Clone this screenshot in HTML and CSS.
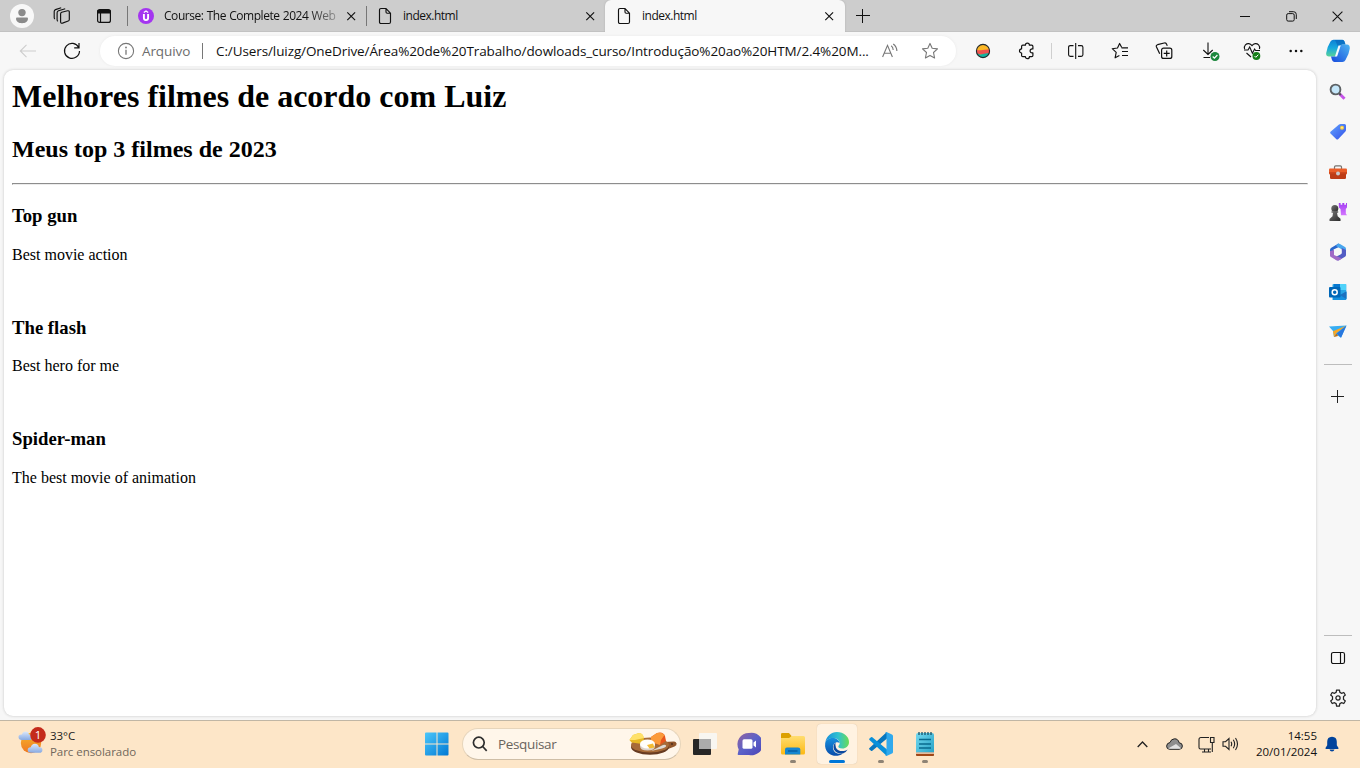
FILE: index.html
```html
<!DOCTYPE html>
<html lang="pt-BR">
<head>
<meta charset="utf-8">
<title>index.html</title>
<link rel="stylesheet" href="styles.css">
</head>
<body>
<svg class="defs" width="0" height="0" aria-hidden="true">
  <symbol id="close" viewBox="0 0 10 10"><path d="M1.300 1.300l7.800 7.800M9.100 1.300l-7.800 7.800" fill="none" stroke="#111" stroke-width="1.150"/></symbol>
  <symbol id="doc" viewBox="0 0 14 18"><path d="M3 1.500h5l4.500 4.700v8.800q0 1.500-1.500 1.500H3q-1.500 0-1.500-1.500V3Q1.500 1.500 3 1.500zM8 1.800v3.200q0 1.200 1.200 1.200h3" fill="none" stroke="#111" stroke-width="1.150"/></symbol>
  <linearGradient id="winG" x1="0" y1="0" x2="1" y2="1"><stop offset="0" stop-color="#4cc7fa"/><stop offset="1" stop-color="#0078d4"/></linearGradient>
  <linearGradient id="cpA" x1="0" y1="0" x2="0" y2="1"><stop offset="0" stop-color="#0b80d5"/><stop offset=".5" stop-color="#18a9de"/><stop offset="1" stop-color="#59d398"/></linearGradient>
  <linearGradient id="cpB" x1="1" y1="0" x2="0" y2="1"><stop offset="0" stop-color="#4db5f1"/><stop offset="1" stop-color="#1749dd"/></linearGradient>
  <linearGradient id="tagG" x1="0" y1="0" x2="1" y2="1"><stop offset="0" stop-color="#62a5ff"/><stop offset="1" stop-color="#3450e8"/></linearGradient>
  <linearGradient id="purG" x1="0" y1="0" x2="0" y2="1"><stop offset="0" stop-color="#a33df3"/><stop offset="1" stop-color="#d477ff"/></linearGradient>
  <linearGradient id="greyG" x1="0" y1="0" x2="1" y2="1"><stop offset="0" stop-color="#777"/><stop offset="1" stop-color="#282828"/></linearGradient>
  <linearGradient id="cloudG" x1="0" y1="0" x2="0" y2="1"><stop offset="0" stop-color="#dbe8fb"/><stop offset="1" stop-color="#87a9e2"/></linearGradient>
  <linearGradient id="sunG" x1="0" y1="0" x2="0" y2="1"><stop offset="0" stop-color="#f7b72b"/><stop offset="1" stop-color="#ee7621"/></linearGradient>
  <linearGradient id="chatG" x1="0" y1="0" x2="1" y2="1"><stop offset="0" stop-color="#93639f"/><stop offset=".5" stop-color="#5b62c9"/><stop offset="1" stop-color="#4b42b5"/></linearGradient>
  <linearGradient id="foldG" x1="0" y1="0" x2="0" y2="1"><stop offset="0" stop-color="#ffdd70"/><stop offset="1" stop-color="#fdb913"/></linearGradient>
  <linearGradient id="edgeT" x1="0" y1="0" x2="1" y2="0"><stop offset="0" stop-color="#168edb"/><stop offset=".55" stop-color="#30c2cf"/><stop offset="1" stop-color="#6bdc54"/></linearGradient>
  <linearGradient id="edgeB" x1="0" y1="0" x2="0" y2="1"><stop offset="0" stop-color="#1590df"/><stop offset="1" stop-color="#0a4caa"/></linearGradient>
  <linearGradient id="noteG" x1="0" y1="0" x2="1" y2="1"><stop offset="0" stop-color="#74d9ef"/><stop offset="1" stop-color="#239fc4"/></linearGradient>
</svg>

<header class="tabstrip">
  <span class="avatar"><svg width="24" height="24" viewBox="0 0 24 24"><circle cx="12" cy="12" r="12" fill="#f8f8f8"/><circle cx="12" cy="8.600" r="3.700" fill="#8b8b8b"/><path d="M6 14.500q0-1 1-1h10q1 0 1 1c0 3-2.500 4.700-6 4.700s-6-1.700-6-4.700z" fill="#8b8b8b"/></svg></span>
  <span class="strip-btn"><svg width="18" height="18" viewBox="0 0 18 18" fill="none" stroke="#111" stroke-width="1.150"><path d="M8.700 5.300l5.900-1.500q1.700-.3 1.700 1.200v7.400q0 1.200-1.100 1.600l-5.700 2.100q-1.900.6-1.900-1.300V7q0-1.400 1.100-1.700z"/><path d="M5 14.200q-.9-.3-.9-1.500V5.800q0-1.500 1.400-2l6.700-2.100M2 12q-.8-.3-.8-1.500V4.600q0-1.500 1.300-2L8.200.7"/></svg></span>
  <span class="strip-btn tabs-btn"><svg width="16" height="16" viewBox="0 0 16 16"><rect x="1.600" y="1.600" width="12.800" height="12.800" rx="2" fill="none" stroke="#111" stroke-width="1.200"/><path d="M1.500 2h13v3.500h-13z" fill="#111"/><path d="M4.500 5v9" stroke="#111" stroke-width="1.200"/></svg></span>
  <div class="tab tab-first">
    <svg class="fav-u" width="16" height="16" viewBox="0 0 16 16"><circle cx="8" cy="8" r="8" fill="#a435f0"/><path d="M5.800 4.400L8 3l2.200 1.400" fill="none" stroke="#fff" stroke-width="1.200"/><path d="M5.900 6v4.100q0 2 2.100 2t2.100-2V6" fill="none" stroke="#fff" stroke-width="1.900"/></svg>
    <span class="tab-title fade">Course: The Complete 2024 Web</span>
    <svg class="x" width="10" height="10"><use href="#close"/></svg>
  </div>
  <div class="tab tab-mid">
    <svg width="14" height="18"><use href="#doc"/></svg>
    <span class="tab-title">index.html</span>
    <svg class="x" width="10" height="10"><use href="#close"/></svg>
  </div>
  <div class="tab tab-active">
    <svg width="14" height="18"><use href="#doc"/></svg>
    <span class="tab-title">index.html</span>
    <svg class="x" width="10" height="10"><use href="#close"/></svg>
  </div>
  <span class="newtab"><svg width="14" height="14" viewBox="0 0 14 14"><path d="M0 6.500h14M6.500 0v14" stroke="#111" stroke-width="1"/></svg></span>
  <div class="window-btns">
    <span><svg width="10" height="10" viewBox="0 0 10 10"><path d="M0 5.500h10" stroke="#111"/></svg></span>
    <span><svg width="11" height="11" viewBox="0 0 11 11" fill="none" stroke="#111"><rect x=".7" y="2.600" width="7.500" height="7.500" rx="1.500"/><path d="M3 .7h4.500q2.800 0 2.800 2.800V8"/></svg></span>
    <span><svg width="11" height="11" viewBox="0 0 11 11"><path d="M.6.6l9.800 9.800M10.400.6L.6 10.400" stroke="#111" stroke-width="1.100"/></svg></span>
  </div>
</header>

<div class="toolbar">
  <span class="nav back"><svg width="18" height="14" viewBox="0 0 18 14"><path d="M17 7H1.500M7.500 .8L1.300 7l6.200 6.200" fill="none" stroke="#cdcdcd" stroke-width="1.100"/></svg></span>
  <span class="nav reload"><svg width="18" height="18" viewBox="0 0 18 18"><path d="M15.700 5.500A7.500 7.500 0 1 0 16.500 9M16 1v4.800h-4.800" fill="none" stroke="#111" stroke-width="1.200"/></svg></span>
  <div class="address">
    <svg width="18" height="18" viewBox="0 0 18 18"><circle cx="9" cy="9" r="7.600" fill="none" stroke="#777" stroke-width="1.100"/><path d="M9 7.800v5" stroke="#777" stroke-width="1.300"/><circle cx="9" cy="5.500" r=".9" fill="#777"/></svg>
    <span class="scheme">Arquivo</span>
    <span class="vline"></span>
    <span class="url">C:/Users/luizg/OneDrive/Área%20de%20Trabalho/dowloads_curso/Introdução%20ao%20HTM/2.4%20M...</span>
    <svg class="aloud" width="16" height="16" viewBox="0 0 16 16" fill="none" stroke="#777" stroke-width="1.100"><path d="M.6 14L5.500 2.300 10.400 14M2.300 10.200h6.400M9.200 2.800q1.900 1.500 2 4.200M11.200 1q3.400 2.200 3.700 7"/></svg>
    <svg class="star" width="18" height="18" viewBox="0 0 18 18"><path d="M9 1.400l2.200 4.900 5.300.6-4 3.600 1.100 5.500L9 13.400 4.400 16l1.100-5.500-4-3.600 5.300-.6z" fill="none" stroke="#777" stroke-width="1.100" stroke-linejoin="round"/></svg>
  </div>
  <div class="tools">
    <span><svg width="16" height="16" viewBox="0 0 16 16"><circle cx="8" cy="8" r="6.700" fill="#fbb725"/><path d="M1.500 7q3 .6 6 0t7-.4q1 2.700-1 5.400-5.500 0-11-.8-1.500-2-1-4.200z" fill="#ef5350"/><path d="M2 10.300q3 1.800 6 .7t6-.7Q12.500 14.700 8 14.700t-6-4.400z" fill="#12b5a0"/><circle cx="8" cy="8" r="6.600" fill="none" stroke="#222a31" stroke-width="1.100"/></svg></span>
    <span><svg width="18" height="18" viewBox="0 0 18 18"><path d="M4.800 3.200h2.600a2 2 0 0 1 4 0h2.300q1.200 0 1.200 1.200v2.500h-.8a2 2 0 1 0 0 4h.8v2.600q0 1.200-1.200 1.200h-2.300a2 2 0 0 1-4 0H4.800q-1.200 0-1.200-1.200V11a2.100 2.100 0 0 1 0-4.200V4.400q0-1.200 1.200-1.200z" fill="none" stroke="#111" stroke-width="1.200" stroke-linejoin="round"/></svg></span>
    <i></i>
    <span><svg width="16" height="16" viewBox="0 0 16 16" fill="none" stroke="#111" stroke-width="1.100"><path d="M5.500 2.600H2.300Q.6 2.600.6 4.200v7.600q0 1.600 1.700 1.600h3.200M10 2.600h3.200q1.700 0 1.700 1.600v7.600q0 1.600-1.700 1.600H10M7.700 0v16"/></svg></span>
    <span><svg width="18" height="18" viewBox="0 0 18 18" fill="none" stroke="#111" stroke-width="1.150" stroke-linejoin="round"><path d="M10.600 5.200L8.600 1.400 6.500 6l-5.300.7 4 3.700-1.100 5.400 4.300-2.300M10.500 5.800H17M11 9.500h6M11 13.500h6"/></svg></span>
    <span><svg width="18" height="18" viewBox="0 0 18 18" fill="none" stroke="#111" stroke-width="1.200"><rect x="6.600" y="6.200" width="10.200" height="10.200" rx="2"/><path d="M11.700 8.400v6M8.700 11.400h6M4.700 11.800L1.500 5Q.8 3.300 2.600 2.700L9.200 1q1.800-.5 2.400 1.200l.7 1.600"/></svg></span>
    <span class="download"><svg width="20" height="20" viewBox="0 0 20 20"><path d="M7 1.500v12M2.300 9L7 13.500 11.700 9M2.500 16.500H9" fill="none" stroke="#111" stroke-width="1.100"/><circle cx="14" cy="15.500" r="4.500" fill="#1c873d"/><path d="M11.700 15.500l1.700 1.700 3-3.200" fill="none" stroke="#fff" stroke-width="1.200"/></svg></span>
    <span><svg width="18" height="18" viewBox="0 0 18 18"><path d="M1.600 7Q.8 4.700 2.400 2.900C4.500.8 7.200 1.300 9 3.700c1.800-2.400 4.500-2.900 6.600-.8Q17.200 4.700 16.400 7M1 8h4l1.700-3 2.700 6.300L11.600 7l1 1.500H17M3.500 11L8 15" fill="none" stroke="#111" stroke-width="1.100"/><circle cx="13.400" cy="14" r="3.900" fill="#167f18"/><path d="M11.500 14l1.300 1.300 2.500-2.600" stroke="#fff" fill="none"/></svg></span>
    <span><svg width="14" height="4" viewBox="0 0 14 4" fill="#111"><circle cx="1.700" cy="2" r="1.250"/><circle cx="7" cy="2" r="1.250"/><circle cx="12.300" cy="2" r="1.250"/></svg></span>
  </div>
  <span class="copilot"><svg width="24" height="24" viewBox="0 0 24 24"><path d="M4.500 2.500Q5.500.8 7.500.8h9q1.500 0 2 1.700l1 3h-3q-2 0-2.700 2l-2.600 8q-.7 2-2.700 2H3Q-.2 17.500.2 14q.8-6 4.300-11.500z" fill="url(#cpA)"/><path d="M9 1h7.500q1.500 0 2 1.500l1 3h-3q-2 0-2.700 2l-.8 2.300z" fill="#0868bd" opacity=".7"/><path d="M19.500 21q-1 2-3 2H8.500Q6.800 23 6 21l-1-3.500h3.500q2 0 2.700-2L13.800 7.500q.7-2 2.700-2H21q3 0 2.800 4-.8 6-4.300 11.500z" fill="url(#cpB)"/><path d="M12.500 6.500h2.200l-3.600 11H9l1.700-5.500z" fill="#f5fbff"/></svg></span>
</div>

<div class="workspace">
  <main class="page">
    <h1>Melhores filmes de acordo com Luiz</h1>
    <h2>Meus top 3 filmes de 2023</h2>
    <hr>
    <h3>Top gun</h3>
    <p>Best movie action</p>
    <br>
    <h3>The flash</h3>
    <p>Best hero for me</p>
    <br>
    <h3>Spider-man</h3>
    <p>The best movie of animation</p>
  </main>
  <aside class="sidebar">
    <span><svg width="18" height="18" viewBox="0 0 18 18"><path d="M10.500 10.800l5 5" stroke="#c653e9" stroke-width="3"/><path d="M9.800 10l2 2" stroke="#555" stroke-width="2"/><circle cx="6.500" cy="6.500" r="4.900" fill="#c5e7fa" stroke="#5d6164" stroke-width="1.900"/></svg></span>
    <span><svg width="18" height="18" viewBox="0 0 18 18"><path d="M10 1.400q.7-.5 1.500-.5h4q1.500 0 1.500 1.600V7q0 .9-.6 1.500l-7.300 7.700q-.9.800-1.700 0L1.500 10.500q-.8-.8 0-1.800z" fill="url(#tagG)"/><circle cx="13" cy="4.700" r="2" fill="#ffcf37"/><circle cx="13" cy="4.700" r=".8" fill="#fff5bf"/></svg></span>
    <span><svg width="18" height="18" viewBox="0 0 18 18"><path d="M5.500 6V4q0-1.200 1.200-1.200h4.600q1.200 0 1.200 1.200v2" fill="none" stroke="#77736f" stroke-width="1.200"/><rect y="5.500" width="18" height="6" rx="1" fill="#e95d28"/><path d="M1 10h16v4.700q0 1.300-1.300 1.300H2.300Q1 16 1 14.700z" fill="#bd3c16"/><path d="M0 9h18v1.500H0z" fill="#ce481d"/><circle cx="9" cy="10.500" r="2" fill="#c9c9cc"/></svg></span>
    <span><svg width="20" height="20" viewBox="0 0 20 20"><path d="M10.800 1h1.800v1.700h1.700V1h2v1.700H18V1h1v4.500L17.800 7v4.500l1.200 1.800h-6L12.500 7l-1.700-1.500z" fill="url(#purG)"/><circle cx="6.800" cy="6.500" r="3.500" fill="url(#greyG)"/><path d="M3.500 9.300h6.700v1.500H9l.7 3.500 2.800 2.500v2.300h-11V17l3-2.700.5-3.500H3.500z" fill="url(#greyG)"/></svg></span>
    <span><svg width="18" height="18" viewBox="0 0 18 18"><path d="M9.500.5L2.300 4.700Q1 5.500 1 7v5l3.500-2V6.500L12 3z" fill="#2866cc"/><path d="M9 .5q1.200 0 2 .5l5 3q1 .7 1 2v4l-4-1V6.500L7 3z" fill="#48a6ee"/><path d="M17 7v5q0 1-1 1.800l-5.500 3.200q-1.500.8-3 0L5 15l7.800-4.500V5z" fill="#525cc4"/><path d="M1 8v4.500q0 1 1 1.500l5 3q1.500 1 3.500 0l2.500-1.500-8-3.500V7z" fill="#a16ac6"/><circle cx="9" cy="9" r="3.200" fill="#f7f7f7"/></svg></span>
    <span><svg width="18" height="18" viewBox="0 0 18 18"><path d="M4.500 1h12q.8 0 .8.800V16q0 .9-.9.900H3.500V2q0-1 1-1z" fill="#28a5e5"/><path d="M5 1h6v6H4.500z" fill="#0878d0"/><path d="M11 1h6v6h-6z" fill="#50d2fa"/><path d="M4 9l7 3 6.500-3.500v7q0 1.400-1.400 1.400H4z" fill="#1490df"/><path d="M11 12l6.300-3.500V16z" fill="#1c70be"/><rect x="0" y="4" width="11.500" height="10.500" rx="1" fill="#0067b8"/><circle cx="5.700" cy="9.200" r="2.500" fill="none" stroke="#fff" stroke-width="1.500"/></svg></span>
    <span><svg width="18" height="18" viewBox="0 0 18 18"><path d="M0 3.500l17.500-1L12 14.800 8 12l-3 2-1-6z" fill="#38aef3"/><path d="M4 8.200l13-5.500L7 10.500 5 14z" fill="#f9a726"/><path d="M7.700 10.400l9.800-7.900L12 14.800z" fill="#2877df"/><path d="M5 14l2.700-3.600L9 13z" fill="#c66b0b"/></svg></span>
    <hr class="side-top">
    <span class="add"><svg width="13" height="13" viewBox="0 0 13 13"><path d="M0 6.500h13M6.500 0v13" stroke="#222"/></svg></span>
    <hr class="side-bottom">
    <span><svg width="16" height="14" viewBox="0 0 16 14"><rect x="1.500" y="1.500" width="13" height="11" rx="1.800" fill="none" stroke="#111" stroke-width="1.150"/><path d="M10.500 1.500v11" stroke="#111" stroke-width="1.150"/></svg></span>
    <span><svg width="18" height="18" viewBox="0 0 18 18" fill="none" stroke="#222" stroke-width="1.250" stroke-linejoin="round"><path d="M7.600 1h2.800l.5 2.400 1.600.9 2.300-.8 1.500 2.500-1.800 1.600v2.800l1.800 1.600-1.500 2.500-2.300-.8-1.600.9-.5 2.400H7.600l-.5-2.400-1.600-.9-2.300.8L1.700 12l1.800-1.600V7.600L1.700 6l1.500-2.500 2.300.8 1.600-.9z"/><circle cx="9" cy="9" r="2.100"/></svg></span>
  </aside>
</div>

<footer class="taskbar">
  <div class="weather">
    <svg width="30" height="28" viewBox="0 0 30 28"><circle cx="13" cy="16" r="10.200" fill="url(#sunG)"/><path d="M4 13q-3.500 0-3.500-3T4 7.500Q4.500 4.500 7.500 4.500T11 7.500h2V13z" fill="url(#cloudG)"/><path d="M13 25.800q-3.300 0-3.300-2.700t3-2.800q1-3.500 4.200-3.500t4 3.300q3.500 0 3.500 2.900t-3.200 2.800z" fill="url(#cloudG)"/><circle cx="20" cy="7.900" r="7.800" fill="#c42b1c"/><text x="20" y="12.100" text-anchor="middle" class="badge-text">1</text></svg>
    <div><div class="temp">33°C</div><div class="sky">Parc ensolarado</div></div>
  </div>
  <span class="start"><svg width="24" height="24" viewBox="0 0 24 24" fill="url(#winG)"><path d="M1 .5h10.500V11.500H0v-10Q0 .5 1 .5zM12.500.5h10q1 0 1 1v10h-11zM0 12.500h11.500v11H1q-1 0-1-1zM12.500 12.500h11v10q0 1-1 1h-10z"/></svg></span>
  <div class="search">
    <svg width="16" height="16" viewBox="0 0 16 16" fill="none" stroke="#2d2d2d" stroke-width="1.700"><circle cx="6.800" cy="6.600" r="5.400"/><path d="M10.700 10.500l4 4.300"/></svg>
    <span>Pesquisar</span>
    <svg class="cheese" width="48" height="24" viewBox="0 0 48 24"><path d="M35 10l10-.5q2 0 2.500 2t-2 3L39 17z" fill="#91562b"/><ellipse cx="21" cy="15" rx="19" ry="7.800" fill="#673b21"/><ellipse cx="21" cy="13" rx="19" ry="7.500" fill="#a76b38"/><path d="M.5 8L4 3l6-2q4 0 5 6l-1.500 5-11-1.500z" fill="#e7b925"/><path d="M.5 8L4 3l6-2q4 0 5 5l-9 2z" fill="#ffe16a"/><path d="M22 5l6-4q6-2 8 3l1 5-6 4-9-3z" fill="#e8561c"/><path d="M22 5l6-4q5-1 7.500 2L32 8l-1 5-9-3z" fill="#fb9a3a"/><path d="M11 12v2q0 4.500 7.500 4.500T26 14v-2z" fill="#dcd2c9"/><ellipse cx="18.500" cy="12" rx="7.500" ry="4.500" fill="#fffefa"/><path d="M18 13l6-1.500 1.500 4-5 1z" fill="#f3bb34"/><path d="M22 19l10-5q4-2 5-.5t-4 3z" fill="#ded9d3"/><circle cx="43" cy="12" r=".9" fill="#4a2b1a"/></svg>
  </div>
  <div class="apps">
    <span class="app"><svg width="24" height="24" viewBox="0 0 24 24"><rect y="7" width="18" height="16" rx="1" fill="#272727"/><rect x="6" y="1" width="18" height="16" rx="1" fill="#f8f6f4" opacity=".93"/><path d="M6 7h12v10H7q-1 0-1-1z" fill="#ababab"/></svg></span>
    <span class="app"><svg width="24" height="24" viewBox="0 0 24 24"><path d="M12 1a11.300 11.300 0 1 1 0 22H1.500q-1 0-.8-1l1-4.500A11.300 11.300 0 0 1 12 1z" fill="url(#chatG)"/><rect x="5.500" y="7.300" width="10" height="9.400" rx="1.500" fill="#fff"/><path d="M16.500 10.500l2.500-2v7l-2.500-2z" fill="#fff"/></svg></span>
    <span class="app open"><svg width="24" height="24" viewBox="0 0 24 24"><path d="M0 2.300Q0 1 1.300 1H8l2.500 3v4H0z" fill="#dca000"/><path d="M0 6h8l3-2h11.500Q24 4 24 5.500V21q0 1.500-1.500 1.500H1.500Q0 22.500 0 21z" fill="url(#foldG)"/><path d="M4 22.500v-5q0-2 2-2h11q2.300 0 2.300 2v5z" fill="#1686cf"/><path d="M7 19h9.500" stroke="#075ea5" stroke-width="1.500"/></svg></span>
    <span class="app current"><svg width="24" height="24" viewBox="0 0 24 24"><path d="M.3 10.500C1.300 4.200 6 0 12 0c6.700 0 12 4.500 12 10 0 4-3 6.500-6.600 6.500-3.200 0-4.500-1.200-4-2.500 1.200-1.200 1.600-2.500 1.100-4C13.700 7.400 10.900 5.800 7.600 6 3.800 6.200 1 8.500.3 10.500z" fill="url(#edgeT)"/><path d="M.2 11C.8 8 4 6 7.700 6c3.500 0 6.600 2.100 7 5-3.300-2.300-7.200.8-6.700 5 .5 4.500 4.500 6.500 9.400 5.700C12 26 1.200 24 .1 14.200z" fill="url(#edgeB)"/><path d="M10.500 10.500C5.700 15 10 22.700 18 21.500q2.900-.9 4.700-4c-3.500 2.200-10 2.400-11.700-1.800q-.9-2.500-.5-5.200z" fill="#0b499f"/></svg></span>
    <span class="app open"><svg width="24" height="24" viewBox="0 0 24 24"><path d="M18 0v6.500L3.300 18.800q-.7.500-1.300 0L.5 17.500q-.8-.8 0-1.500L17 .8z" fill="#0877bf"/><path d="M18 24v-6.500L3.300 5.200q-.7-.5-1.300 0L.5 6.500q-.8.800 0 1.500L17 23.200z" fill="#0890da"/><path d="M17.500 0L23 2.600q1 .5 1 1.500v15.800q0 1-1 1.500L17.500 24q-.8.200-1.500-.5 1.500.3 1.500-1.200V1.700Q17.500.5 16 .5q.7-.7 1.500-.5z" fill="#30a9ed"/></svg></span>
    <span class="app open"><svg width="24" height="24" viewBox="0 0 24 24"><path d="M3 3q0-2 2-2h14q2 0 2 2v20.500H3z" fill="url(#noteG)"/><path d="M3 20.500h18V23q0 1-1 1H4q-1 0-1-1z" fill="#a24716"/><path d="M3 20.500h18v1.200H3z" fill="#fff0dc"/><path d="M6 7.500h12M6 12h12M6 16h12" stroke="#096b8e" stroke-width="1.500"/><path d="M6 0v3M9 0v3M12 0v3M15 0v3M18 0v3" stroke="#17536a" stroke-width="1.300"/></svg></span>
  </div>
  <div class="tray">
    <svg class="chev" width="11" height="7" viewBox="0 0 11 7"><path d="M.7 6l4.800-5 4.800 5" fill="none" stroke="#222" stroke-width="1.300"/></svg>
    <svg class="cloud" width="17" height="12" viewBox="0 0 17 12"><path d="M4 11.300q-3.400 0-3.400-3.100Q.7 5 4 4.500 5 1 8.500.8t4.700 4q3.200.2 3.200 3.300t-3.300 3.200z" fill="#8d8d8d" stroke="#222"/><path d="M2 10.500L10 6l5 4.200q-.8.600-2 .6H4z" fill="#e1e1e1"/></svg>
    <svg class="net" width="17" height="17" viewBox="0 0 17 17" fill="none" stroke="#222" stroke-width="1.100"><path d="M11 1.500H3Q1 1.500 1 3.500v8q0 1.500 1.500 1.500H13M4 16h9M6.500 13v3M10.500 13v3M12.500 1.500h3.500v5h-3.500zM14.300 6.500V16"/></svg>
    <svg class="sound" width="17" height="14" viewBox="0 0 17 14" fill="none" stroke="#222" stroke-width="1.100"><path d="M1 4.700h2.500L7 1.500v11L3.500 9.300H1zM9 4.700q1.400 2.300 0 4.600M11.300 2.800q2.700 4.200 0 8.400M13.500 1q4 6 0 12"/></svg>
    <div class="clock"><div>14:55</div><div>20/01/2024</div></div>
    <svg class="bell" width="14" height="16" viewBox="0 0 14 16" fill="#00439c"><path d="M7 .7q4.800.2 4.800 5v3.500l1.600 2.600v1.200H.6v-1.200l1.600-2.600V5.700Q2.200.9 7 .7zM4.500 13.500h5Q9 15.500 7 15.500t-2.500-2z"/></svg>
  </div>
</footer>
</body>
</html>
```
FILE: styles.css
```css
* { box-sizing: border-box; }
body {
  margin: 0;
  width: 1360px;
  height: 768px;
  overflow: hidden;
  display: flex;
  flex-direction: column;
  background: #f7f7f7;
  color: #111;
  font-family: "Open Sans", "Noto Sans", sans-serif;
  font-size: 12px;
}
svg { display: block; flex: none; }
.defs { position: absolute; }

.tabstrip {
  display: flex;
  align-items: center;
  height: 32px;
  flex: none;
  background: #cdcdcd;
  box-shadow: inset 0 -1px #c2c2c2;
}
.avatar { width: 42px; padding-left: 10px; }
.strip-btn { width: 40px; display: flex; justify-content: center; }
.tabs-btn { width: 45px; padding-right: 1px; }
.tab { display: flex; align-items: center; height: 32px; }
.tab-first { width: 239px; padding-left: 11px; background: linear-gradient(#777, #777) 0 6px / 1px 20px no-repeat; }
.fav-u { margin-right: 10px; }
.tab-mid { width: 239px; padding-left: 12px; background: linear-gradient(#777, #777) 0 6px / 1px 20px no-repeat; }
.tab-active { width: 240px; padding-left: 12px; background: #f7f7f7; border-radius: 6px 6px 0 0; box-shadow: 0 0 2px #aaa; clip-path: inset(0 -2px 0 -2px); }
.tab-mid svg:first-child, .tab-active svg:first-child { margin-right: 11px; }
.tab-title { flex: 1; white-space: nowrap; letter-spacing: -0.45px; margin-top: -1px; word-spacing: 0.5px; }
.tab-mid .tab-title, .tab-active .tab-title { letter-spacing: -0.5px; }
.fade { flex: none; width: 176px; -webkit-mask-image: linear-gradient(90deg, #000 145px, rgba(0, 0, 0, 0.2) 176px); mask-image: linear-gradient(90deg, #000 145px, rgba(0, 0, 0, 0.2) 176px); }
.tab .x { margin-left: auto; margin-right: 10px; }
.tab-active .x { margin-right: 11px; }
.newtab { padding-left: 11px; }
.window-btns { display: flex; margin-left: auto; }
.window-btns span { width: 46px; display: flex; justify-content: center; align-items: center; }

.toolbar { display: flex; align-items: center; height: 38px; flex: none; }
.nav { display: flex; align-items: center; justify-content: center; }
.back { width: 56px; }
.reload { width: 32px; }
.address {
  display: flex;
  align-items: center;
  width: 856px;
  height: 30px;
  margin-left: 12px;
  padding-left: 17px;
  border-radius: 15px;
  background: #fff;
  box-shadow: 0 0 3px #e9e9e9;
}
.scheme { width: 60px; margin-left: 7px; color: #6c6c6c; font-size: 13.500px; letter-spacing: -0.1px; }
.vline { width: 1px; height: 16px; background: #777; }
.url { width: 653px; margin-left: 13px; font-size: 13.500px; letter-spacing: -0.1px; white-space: nowrap; }
.aloud { margin-left: 13px; }
.star { margin-left: 23px; }
.tools { display: flex; align-items: center; margin-left: 5px; }
.tools span { width: 44px; display: flex; justify-content: center; }
.tools i { width: 1px; height: 16px; margin: 0 2px 0 2px; background: #cfcfcf; }
.tools .download { padding-left: 5px; }
.copilot { margin-left: 8px; }

.workspace { display: flex; flex: 1; }
.page {
  width: 1312px;
  height: 646px;
  margin-left: 4px;
  padding: 8px;
  border-radius: 9px;
  background: #fff;
  box-shadow: 0 0 3px #c4c4c4;
  color: #000;
  font-family: "Liberation Serif", "Times New Roman", serif;
  font-size: 16px;
}
.page h1 { margin: 0; font-size: 32px; line-height: 37px; }
.page h2 { margin: 20px 0; font-size: 24px; line-height: 28px; }
.page hr { height: 2px; margin: 0 0 20px; border: 1px solid; border-color: #8d8d8d #ececec #ececec #8d8d8d; }
.page h3 { margin: 19px 0 18.500px; font-size: 18.720px; line-height: 22px; }
.page p { margin: 16px 0; line-height: 18px; font-size: 16px; }
.page br { line-height: 18px; }

.sidebar { display: flex; flex-direction: column; align-items: center; width: 44px; padding: 2px 0 2px; }
.sidebar span { display: flex; align-items: center; justify-content: center; width: 40px; height: 40px; }
.sidebar hr { width: 28px; height: 1px; margin: 0; border: 0; background: #bdbdbd; }
.sidebar .side-top { margin: 12px 0 11px; }
.sidebar .add { padding-right: 1px; }
.sidebar .side-bottom { margin: auto 0 2px; }

.taskbar { display: flex; align-items: center; height: 48px; flex: none; padding-bottom: 1px; border-top: 1px solid #c0b6a5; background: #fde6c8; }
.weather { display: flex; align-items: center; width: 406px; padding-left: 18px; line-height: 16px; font-size: 11.500px; letter-spacing: -0.05px; }
.weather svg { margin: -6px 2px 0 0; }
.temp { color: #222; }
.sky { color: #70675b; }
.badge-text { fill: #fff; font-size: 11.500px; }
.start { margin-left: 19px; }
.search { display: flex; align-items: center; width: 219px; height: 32px; margin-left: 13px; padding: 0 3px 0 9px; border: 1px solid #e7d5bb; border-bottom-color: #cfbea6; border-radius: 16px; background: #fff6ea; }
.search span { margin-left: 10px; color: #69645d; font-size: 13.500px; letter-spacing: -0.35px; }
.cheese { margin-left: auto; }
.apps { display: flex; gap: 4px; margin-left: 4px; }
.app { position: relative; display: flex; align-items: center; justify-content: center; width: 40px; height: 40px; border-radius: 4px; }
.current { background: #fff2e1; box-shadow: 0 0 1px #c8b79f; }
.open::after, .current::after { content: ""; position: absolute; bottom: 1px; left: 17px; width: 6px; height: 3px; border-radius: 2px; background: #8e8375; }
.current::after { left: 12px; width: 16px; background: #0077d8; }
.tray { display: flex; align-items: center; margin-left: auto; padding-right: 21px; }
.cloud { margin-left: 18px; }
.net { margin-left: 15px; }
.sound { margin-left: 7px; }
.clock { width: 72px; margin-left: 6px; text-align: right; line-height: 16px; font-size: 11.500px; white-space: nowrap; }
.bell { margin-left: 8px; }
```
